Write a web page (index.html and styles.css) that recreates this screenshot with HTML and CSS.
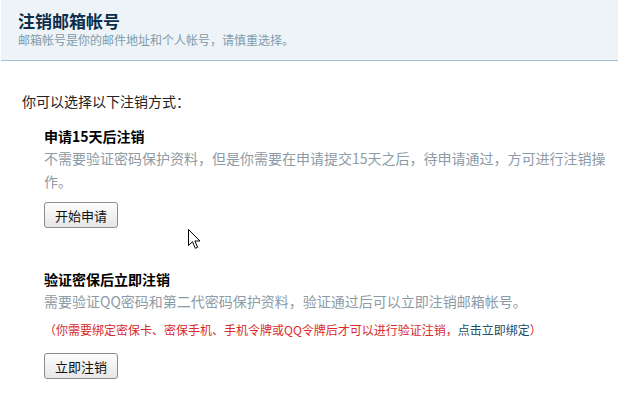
FILE: index.html
```html
<!DOCTYPE html>
<html lang="zh-CN">
<head>
<meta charset="utf-8">
<title>注销邮箱帐号</title>
<link rel="stylesheet" href="styles.css">
</head>
<body>
<div class="header">
  <h1 class="title">注销邮箱帐号</h1>
  <p class="subtitle">邮箱帐号是你的邮件地址和个人帐号，请慎重选择。</p>
</div>
<div class="main">
  <p class="intro">你可以选择以下注销方式：</p>
  <div class="option">
    <h2 class="opt-title">申请15天后注销</h2>
    <p class="desc">不需要验证密码保护资料，但是你需要在申请提交15天之后，待申请通过，方可进行注销操作。</p>
    <button class="btn">开始申请</button>
  </div>
  <div class="option second">
    <h2 class="opt-title">验证密保后立即注销</h2>
    <p class="desc">需要验证QQ密码和第二代密码保护资料，验证通过后可以立即注销邮箱帐号。</p>
    <p class="note">（你需要绑定密保卡、密保手机、手机令牌或QQ令牌后才可以进行验证注销，<a class="link" href="#">点击立即绑定</a>）</p>
    <button class="btn">立即注销</button>
  </div>
</div>
<svg class="cursor" width="13" height="21" viewBox="0 0 13 21">
  <path d="M0.5 0.5 L0.5 16.5 L4.5 12.7 L7.3 19.3 L9.6 18.3 L6.9 12 L12 12 Z" fill="#fff" stroke="#000" stroke-width="1"/>
</svg>
</body>
</html>
```
FILE: styles.css
```css
html, body {
  margin: 0;
  padding: 0;
  background: #fff;
}
body {
  font-family: "Noto Sans CJK SC", "Noto Sans", sans-serif;
  position: relative;
  width: 618px;
  height: 395px;
  overflow: hidden;
}
.header {
  background: #edf3f7;
  border-bottom: 1px solid #a3bfcd;
  padding: 11px 17px 11px 17px;
  margin-left: 1px;
}
.title {
  margin: 0;
  font-size: 17px;
  line-height: 20px;
  font-weight: bold;
  color: #0c2d4a;
}
.subtitle {
  margin: 0;
  font-size: 12px;
  line-height: 18px;
  color: #7f9cad;
}
.main {
  padding: 30px 0 0 22px;
}
.intro {
  margin: 0;
  font-size: 14px;
  line-height: 20px;
  color: #222;
}
.option {
  padding-left: 22px;
  padding-right: 8px;
  margin-top: 15px;
}
.option.second {
  margin-top: 41px;
}
.opt-title {
  margin: 0;
  font-size: 14px;
  line-height: 20px;
  font-weight: bold;
  color: #000;
}
.desc {
  margin: 1px 0 0 0;
  font-size: 14px;
  line-height: 23px;
  color: #8c9ba6;
}
.note {
  margin: 7px 0 0 0;
  font-size: 12px;
  line-height: 20px;
  color: #d92b2b;
}
.link {
  color: #1d4e6b;
  text-decoration: none;
}
.btn {
  display: block;
  margin-top: 9px;
  width: 74px;
  height: 26px;
  padding: 0;
  font-family: "Noto Sans CJK SC", sans-serif;
  font-size: 13px;
  color: #111;
  border: 1px solid #8c8c8c;
  border-radius: 3px;
  background: linear-gradient(#fefefe, #e6e6e6);
}
.second .btn {
  margin-top: 13px;
}
.cursor {
  position: absolute;
  left: 188px;
  top: 229px;
}
```
